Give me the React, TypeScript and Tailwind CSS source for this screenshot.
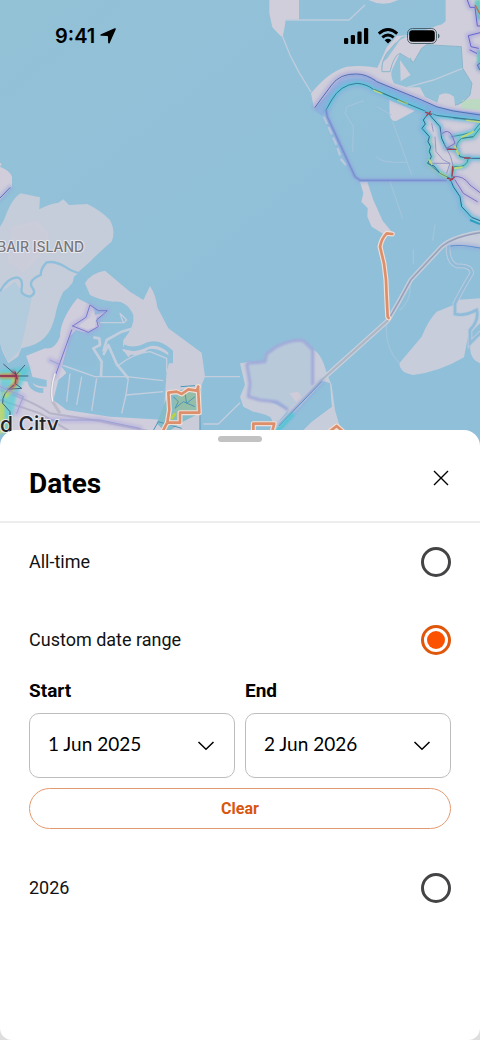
import { useState } from "react";

const WATER = "#90bfd9";

type TrailProps = { d: string; glow?: string; core?: string; hot?: boolean };

function Trail({ d, glow = "#8fa3dc", core = "#5a68b8", hot = false }: TrailProps) {
  return (
    <g fill="none" strokeLinejoin="round" strokeLinecap="round">
      <path d={d} stroke={glow} strokeWidth={hot ? 24 : 18} opacity="0.4" filter="url(#soft)" />
      {hot && <path d={d} stroke="#4fd0dc" strokeWidth="12" opacity="0.75" filter="url(#fine)" />}
      <path d={d} stroke={core} strokeWidth="3" />
    </g>
  );
}

function Segment({ d }: { d: string }) {
  return (
    <g fill="none" strokeLinejoin="round" strokeLinecap="round">
      <path d={d} stroke="#f1dfd5" strokeWidth="15" />
      <path d={d} stroke="#dd8f6c" strokeWidth="8" />
    </g>
  );
}

function HeatMap() {
  return (
    <svg
      className="absolute inset-x-0 top-0 h-[460px] w-full"
      viewBox="0 0 480 460"
      preserveAspectRatio="xMidYMin slice"
      role="img"
      aria-label="Heatmap of the bay"
    >
      <defs>
        <linearGradient id="bay" x1="0" y1="0" x2="0.5" y2="0.6">
          <stop offset="0" stopColor="#93c2d7" />
          <stop offset="1" stopColor={WATER} />
        </linearGradient>
        <filter id="soft" x="-200" y="-400" width="1400" height="1600" filterUnits="userSpaceOnUse">
          <feGaussianBlur stdDeviation="5" />
        </filter>
        <filter id="fine" x="-200" y="-400" width="1400" height="1600" filterUnits="userSpaceOnUse">
          <feGaussianBlur stdDeviation="3" />
        </filter>
      </defs>
      <rect width="480" height="460" fill="url(#bay)" />

      {/* north-east shore */}
      <g transform="translate(240 0) scale(0.33333)">
        <g fill="#cfceda">
          <path d="M88 0H177V60H137L134 80L128 112L118 104L97 82L88 40Z" />
          <path d="M385 0Q430 22 475 0Z" />
          <path d="M617 0V62Q612 72 595 76L520 104L470 108L440 142L412 203Q370 195 320 200Q265 215 213 280L222 325L300 245Q350 225 400 245L545 300L640 345L720 352V0Z" />
          <path d="M448 300L525 332L470 362Q455 368 449 345Z" />
          <path d="M560 345L720 365V675L695 655L665 620L655 580L630 535L575 500L565 485L570 410L550 370Z" />
          <path d="M360 545H382L400 600L428 662L455 695Q450 715 435 705L395 680L382 650L383 625L364 605L370 580Z" />
        </g>
        <path fill="#92c1d8" d="M510 108V170L520 188L545 145L560 134L664 140L668 205L696 250L690 285Q670 310 645 316L642 290Q620 272 598 285L592 308L555 290L540 262H500L462 250Q448 225 458 205L475 170L500 190Q470 160 450 215H426Q422 190 440 160L468 128L485 110Z" />
        <path fill="#cfceda" d="M480 180L512 225L482 244ZM442 175L480 120L510 105V180L480 160L452 216H425L430 185Z" />
        <path fill="#bcd9c1" d="M668 300L720 296V330L662 326Z" />
        <g fill="none" stroke="#bfcddd" strokeWidth="4">
          <path d="M137 60H327L375 15M127 108L150 165L177 217L213 276M500 262L580 240L668 205" />
          <path d="M510 178L520 188L545 145L560 134L664 140L668 205L696 250L690 285Q670 310 645 316M468 128L440 160Q422 190 426 215H450Q462 165 480 160L510 178" stroke="#8fb6cb" strokeWidth="3" />
          <path d="M320 320L372 302M320 320L315 340L340 380L338 455M410 320L455 345M458 365L515 525M410 470Q420 490 500 487M450 545L488 655" strokeWidth="3" stroke="#a7c5dc" />
          <path d="M252 350L290 435L305 480L322 500" strokeWidth="7" strokeDasharray="24 10" />
        </g>
        <path d="M235 340L285 272Q312 236 350 237Q385 238 410 258L550 320Q600 342 720 352" fill="none" stroke="#89afdd" strokeWidth="28" opacity="0.75" />
        <path d="M420 262L560 322Q620 342 720 350" fill="none" stroke="#72bce0" strokeWidth="16" opacity="0.8" />
        <Trail d="M225 322L275 255Q300 220 350 222Q380 222 410 245L545 300Q590 325 640 333L720 345" glow="#9593dd" core="#4d6eb3" />
        <Trail d="M258 330L275 300Q300 255 350 250Q380 252 400 268L500 310L560 335Q590 350 620 350L720 362" hot core="#3c7595" />
        <Trail d="M258 330L262 350L345 530L360 541H620" core="#6a81cc" />
        <path d="M258 330L262 350L345 530L360 541H620" fill="none" stroke="#7f93d6" strokeWidth="9" opacity="0.55" />
        <g fill="none" stroke="#c6d868" strokeWidth="12" opacity="0.55" filter="url(#fine)">
          <path d="M568 410L570 440L574 470L563 490L600 520L630 535M618 443L650 450L660 470L685 475M650 450Q645 430 665 415L700 410L720 385M685 475Q682 505 642 500L635 535" />
        </g>
        <Trail d="M565 340L550 360L556 372L546 385L568 410L564 425L572 440L568 455L574 470L563 490L582 498L600 520L630 535L640 560L660 590L665 620L695 652L720 662" hot core="#3a5d8e" />
        <Trail d="M565 340L600 380L605 415L618 443L650 450L660 470L685 475H720" hot core="#3a5d8e" />
        <Trail d="M685 475Q682 505 642 500L635 535M650 450Q645 430 665 415L700 410L720 385M635 410Q670 405 700 395L720 370" hot core="#3f8f96" />
        <Trail d="M607 400Q625 385 637 408L645 430L620 445M640 530Q670 525 690 555L720 578M645 540L670 580L712 605" glow="#a89fdc" core="#7774bf" />
        <path d="M585 410L588 455L610 480L630 490L620 520M570 490H630M575 370L580 395M640 500L632 470L612 430" fill="none" stroke="#7a7fbb" strokeWidth="2" />
        <g fill="none" stroke="#d5dc67" strokeWidth="6" strokeLinecap="round" opacity="0.8">
          <path d="M403 271L425 280M475 301L500 310M665 412L700 395M655 462L645 440M568 480L575 492M680 360L720 366M600 520L620 530M645 505L665 502" />
        </g>
        <path d="M403 268L500 310M665 415L700 410M565 490L600 520L630 535M640 354L720 362" fill="none" stroke="#3c7585" strokeWidth="2" />
        <g fill="none" stroke="#a63d50" strokeWidth="4" strokeLinecap="round">
          <path d="M557 337L574 343M560 347L571 335M622 448H648M674 474H690M622 535L638 538M638 500L636 528M630 542L643 532" />
        </g>
        <path d="M712 0L720 60M720 150V210" stroke="#50cbb6" strokeWidth="18" opacity="0.8" filter="url(#fine)" />
        <Trail d="M682 0L690 22H705L712 78H720M720 98L685 107L693 140L715 145M690 150L710 160M720 190L712 195L720 210" glow="#9a8fe0" core="#6565cb" />
        <path d="M705 15L720 42" stroke="#b7704c" strokeWidth="4" />
      </g>

      {/* western islands and salt ponds */}
      <g transform="translate(0 220) scale(0.33333)">
        <path fill="#d1cddb" d="M0 -172L5 -168L0 -160Q28 -150 36 -130V-100L0 -60Z" />
        <Trail d="M-6 -60L30 -97" />
        <path fill="#c5ccda" d="M0 20L12 0Q35 -65 62 -80L120 -68L118 -32Q150 -50 175 -52L190 -62L207 -45L262 -48Q300 -30 330 0Q348 35 335 65Q310 85 270 125L236 155Q220 195 190 215Q172 250 165 290Q155 330 135 352Q115 375 65 385Q55 400 50 440L20 440L0 370Z" />
        <path fill="#cfcdda" d="M35 20L110 0L150 40L120 110L70 160L20 120Z" opacity="0.6" filter="url(#soft)" />
        <path fill="#b2cbdd" d="M0 220L45 185L70 225L95 235L75 330L60 390L25 425L0 370Z" />
        <path fill={WATER} d="M215 200L222 170L240 155L262 185L245 225L228 240L190 300L178 352L135 385L60 400L120 365L150 345Q172 270 190 225Z" />
        <path fill={WATER} d="M0 380L25 430L75 395L70 435L100 480L80 520L20 450L0 430Z" />
        <path d="M240 160Q215 155 195 140Q165 122 140 127Q122 145 122 165Q85 180 95 200Q112 220 90 230Q60 225 65 205Q70 175 50 172Q20 175 0 215" fill="none" stroke="#8fbfda" strokeWidth="7" />
        <g fill="#cbccda">
          <path d="M255 190Q270 160 315 152L390 215L430 240L450 198Q468 225 472 262L505 325L605 398L615 470L605 495L600 640H480L490 600L500 455L512 410Q470 380 445 388Q410 420 368 392L370 360Q405 320 400 285Q380 240 340 245Q300 240 270 225Z" />
          <path fill="#d0cedc" d="M232 235L262 250Q285 260 285 285L322 275L290 295L300 320L265 335L215 345L185 440L200 460L175 480L160 540L200 570L330 590L500 600V640H0V480L60 480L100 490Q110 500 140 500V480L95 470L72 410L135 385Q165 390 180 350Q180 300 232 235Z" />
        </g>
        <path fill="#90bed9" d="M228 330L295 350L285 440L188 435L208 350ZM202 455L490 482V570L470 595L330 582L165 545L180 480Z" />
        <path fill="none" stroke={WATER} strokeWidth="14" d="M70 405Q80 430 90 470Q85 510 130 512M370 380Q400 395 440 375Q475 360 512 395V430" />
        <g fill="none" stroke="#c2cedd" strokeLinejoin="round">
          <path strokeWidth="8" d="M280 352L298 355L300 375L280 385L305 425L303 470M310 405L325 375L350 432L385 475M310 395L320 360L365 335L400 325" />
          <path strokeWidth="4" d="M185 435L285 470H380L490 482M350 440Q400 400 450 395L500 415V455M385 475L378 525L490 515M378 525L365 580M290 475L275 572M210 460L200 545M245 470L230 555M300 308H370L360 280L380 300L370 310M142 425L180 432M615 470H720M610 612H655L720 548" />
        </g>
        <path fill="#c9ccda" d="M368 388L402 394L385 412Z" />
        <path d="M0 510Q100 545 150 580L280 600L480 640M0 540L120 580L220 640" stroke="#a9a9c0" strokeWidth="6" fill="none" opacity="0.7" />
        <Trail d="M218 318L258 292L270 255L295 272H322L290 300L295 320L265 337L218 318M215 330L165 470" glow="#a69ee0" core="#7678cb" />
        <path d="M268 295L288 290L285 322L262 328L235 318Z" fill="#d2cfdd" />
        <path d="M165 460Q150 510 158 545L180 580" fill="none" stroke="#bdbbc8" strokeWidth="9" />
        <path d="M165 460Q150 510 158 545" fill="none" stroke="#f0eef5" strokeWidth="4" />
        <path d="M0 450L90 440L50 530L30 640H0Z" fill="#50cdd4" opacity="0.7" filter="url(#soft)" />
        <path d="M0 468H50L40 500L12 530M5 550V640" fill="none" stroke="#c9da52" strokeWidth="18" opacity="0.75" filter="url(#fine)" />
        <path d="M0 468H52L48 490L25 512M38 452L52 478" fill="none" stroke="#c33e5e" strokeWidth="9" opacity="0.8" strokeLinejoin="round" filter="url(#fine)" />
        <path d="M0 468H85M10 432L48 465L75 435M50 465L45 490L65 505L20 508M42 495Q5 520 8 550L30 575V600" fill="none" stroke="#45607c" strokeWidth="3" />
        <path d="M0 468H48L52 478L45 455" fill="none" stroke="#9c3050" strokeWidth="4" />
        <Trail d="M0 500L70 530L50 580M130 600L300 600L420 625M150 420L175 432" glow="#a79fe0" core="#9ca0d4" />
        <path d="M508 515L595 502L598 580L540 610L500 640L470 610Z" fill="#84bcca" />
        <path d="M520 540L550 515L590 515L588 570L545 575L530 600Z" fill="#9bbf9b" opacity="0.7" filter="url(#fine)" />
        <path d="M520 530L535 545L525 565L550 545L585 560M555 520L560 550L585 530M600 505V640M455 640L475 605L545 625M542 500L585 497" fill="none" stroke="#4c97b5" strokeWidth="3" />
        <path d="M513 597L526 580" stroke="#b7d344" strokeWidth="9" />
        <Segment d="M595 500L590 512L565 508L545 522L530 515L505 518L508 570L502 607L485 640M594 500L598 578H540V608H502" />
      </g>

      {/* eastern shore, bridge and sloughs */}
      <g transform="translate(240 220) scale(0.33333)">
        <g fill="#c7cdda">
          <path d="M478 430L545 350Q565 300 590 275L640 255L645 240L720 235V310L685 345L672 412Q600 455 520 465Q480 460 478 430Z" />
          <path d="M690 385Q700 350 720 345V430Q692 420 690 385Z" />
          <path d="M0 430L30 425L80 540L145 570L120 600L105 640H85Q120 590 60 580L40 575L10 560L0 530L15 495Z" />
          <path d="M218 388Q245 400 262 465L275 495L285 570L305 640H180L215 605L275 560L270 490L240 480L180 560L145 590L140 560L215 495Z" />
          <path d="M620 75Q650 50 720 45V82L640 78Z" />
        </g>
        <path fill={WATER} d="M240 485L268 490L275 560L210 608L180 640H120Z" />
        <path d="M20 430L75 425L80 402L110 380Q160 355 190 362L218 390V495L170 545L145 565L110 545L60 540L25 530L30 490Z" fill="#b8cada" />
        <path d="M20 430L75 425L80 402L110 380Q160 355 190 362L218 390V495M145 570L110 545L60 540L25 530L30 490L20 430" fill="none" stroke="#a2a9d9" strokeWidth="9" strokeLinejoin="round" filter="url(#fine)" />
        <path d="M148 520L175 515L188 535L170 550Z" fill="#d0cbd8" />
        <g fill="none" strokeLinecap="round">
          <path d="M440 310Q432 380 478 430M510 190Q515 240 480 270M520 90V130M585 15L578 60" stroke="#a0c5dc" strokeWidth="4" />
          <path d="M625 80Q622 125 650 138Q695 135 695 160Q665 210 645 250V282Q670 290 710 270Q718 300 690 330V370L720 340" stroke="#b9cadc" strokeWidth="14" />
          <path d="M625 80Q622 125 650 138Q695 135 695 160Q665 210 645 250V282Q670 290 710 270Q718 300 690 330V370L720 340" stroke="#90bcd9" strokeWidth="8" />
          <path d="M720 38Q640 50 605 80L512 180Q475 250 443 302L245 480L118 615" stroke="#c9cfdd" strokeWidth="14" />
          <path d="M720 38Q640 50 605 80L512 180Q475 250 443 302L245 480L118 615" stroke="#adb8c5" strokeWidth="7" />
          <path d="M720 38Q640 50 605 80L512 180Q475 250 443 302" stroke="#8288b8" strokeWidth="2" />
        </g>
        <Trail d="M245 485L118 617M632 78Q660 72 720 84" core="#5c8fce" />
        <path d="M160 580L105 640" stroke="#43c8d3" strokeWidth="14" opacity="0.7" filter="url(#fine)" />
        <path d="M690 0L720 12" stroke="#2b9fc0" strokeWidth="6" />
        <Segment d="M457 42L440 40Q425 55 420 80L432 130Q440 180 440 230L443 290L446 294" />
        <Segment d="M40 640V611H103L95 640M262 640L290 618L315 640" />
      </g>

      <g fontFamily="Inter, sans-serif" stroke="#e8e8ee" strokeWidth="2" paintOrder="stroke" strokeLinejoin="round">
        <text x="-3" y="252" fontSize="14" fontWeight="500" fill="#77777c">BAIR ISLAND</text>
        <text x="0" y="432" fontSize="21" fontWeight="500" fill="#242428">d City</text>
      </g>
    </svg>
  );
}

function StatusBar() {
  return (
    <div className="relative flex items-center justify-between pt-[22px] pr-10 pl-[55px] text-black">
      <div className="flex items-center gap-[5px]">
        <span className="font-['Inter',sans-serif] text-xl leading-7 font-semibold">9:41</span>
        <svg className="size-4" viewBox="0 0 16 16" aria-hidden="true">
          <path d="M14.600.3Q16.300-.2 15.700 1.500L9.700 14.900Q8.700 16.300 8.100 14.600L8 8.700Q7.900 8 7.300 8L1.200 7.800Q-.6 7.200 1 6.200Z" />
        </svg>
      </div>
      <div className="flex items-center gap-2">
        <svg className="h-4 w-[25px]" viewBox="0 0 25 16" aria-hidden="true">
          <rect x="0" y="10" width="4.200" height="6" rx="1.200" />
          <rect x="6.800" y="7" width="4.200" height="9" rx="1.200" />
          <rect x="13.400" y="3.500" width="4.200" height="12.500" rx="1.200" />
          <rect x="20" y="0" width="4.200" height="16" rx="1.200" />
        </svg>
        <svg className="h-4 w-[22px]" viewBox="0 0 22 16" fill="none" stroke="currentColor" strokeWidth="2.800" aria-hidden="true">
          <path d="M1.800 5.600Q11-2.500 20.200 5.600M5.300 9.400Q11 4.500 16.700 9.400" />
          <path d="M11 15.500L7.700 12.200Q11 9.500 14.300 12.200Z" fill="currentColor" stroke="none" />
        </svg>
        <svg className="h-4 w-[33px]" viewBox="0 0 33 16" aria-hidden="true">
          <rect x=".5" y=".5" width="29" height="15" rx="4.800" fill="none" stroke="#4d6570" />
          <rect x="2.200" y="2.200" width="25.600" height="11.600" rx="3.200" />
          <path d="M31 5.500Q32.600 6.300 32.600 8T31 10.500Z" fill="#4d6570" />
        </svg>
      </div>
    </div>
  );
}

type Range = "all" | "custom" | "2026";

function RangeOption({ id, label, checked, onSelect }: { id: Range; label: string; checked: boolean; onSelect: (id: Range) => void }) {
  return (
    <label className="flex h-[78px] items-center justify-between text-lg text-[#111111]">
      {label}
      <input
        type="radio"
        name="range"
        value={id}
        checked={checked}
        onChange={() => onSelect(id)}
        className="size-[30px] appearance-none rounded-full border-3 border-[#444446] bg-clip-content p-[3px] checked:border-[#e0560b] checked:bg-[#fc5200]"
      />
    </label>
  );
}

function DateField({ id, label, value }: { id: string; label: string; value: string }) {
  return (
    <div className="flex min-w-0 flex-1 flex-col gap-[10px]">
      <label htmlFor={id} className="text-[19px] leading-6 font-bold">
        {label}
      </label>
      <div className="relative">
        <select
          id={id}
          defaultValue={value}
          className="h-[65px] w-full appearance-none rounded-[10px] border border-[#bdbdbd] bg-white pr-12 pb-[3px] pl-[18px] font-['Lato',sans-serif] text-[19px] text-black"
        >
          <option>{value}</option>
        </select>
        <svg
          className="pointer-events-none absolute top-7 right-5 h-[10px] w-[18px]"
          viewBox="0 0 18 10"
          fill="none"
          stroke="black"
          strokeWidth="1.500"
          aria-hidden="true"
        >
          <path d="M1.500 1L9 8.300L16.500 1" />
        </svg>
      </div>
    </div>
  );
}

export default function App() {
  const [range, setRange] = useState<Range>("custom");

  return (
    <div className="relative flex min-h-screen flex-col overflow-hidden bg-[#dedede] font-['Roboto',sans-serif] text-black">
      <HeatMap />
      <header className="shrink-0 basis-[430px]">
        <StatusBar />
      </header>
      <main className="relative flex flex-1 flex-col rounded-t-2xl rounded-b-xl bg-white pt-[6px]">
        <div className="h-[6px] w-11 self-center rounded-full bg-[#c2c2c2]" />
        <div className="flex h-[81px] items-center justify-between border-b-2 border-[#ededed] px-[29px]">
          <h1 className="pt-1 text-[28px] leading-8 font-bold">Dates</h1>
          <button type="button" aria-label="Close" className="-mr-1 mb-2 flex size-7 items-center justify-center">
            <svg className="size-4" viewBox="0 0 16 16" fill="none" stroke="black" strokeWidth="1.400" aria-hidden="true">
              <path d="M1 1L15 15M15 1L1 15" />
            </svg>
          </button>
        </div>
        <form className="flex flex-col px-[29px]">
          <RangeOption id="all" label="All-time" checked={range === "all"} onSelect={setRange} />
          <RangeOption id="custom" label="Custom date range" checked={range === "custom"} onSelect={setRange} />
          <div className="flex gap-[10px]">
            <DateField id="start" label="Start" value="1 Jun 2025" />
            <DateField id="end" label="End" value="2 Jun 2026" />
          </div>
          <button type="button" className="mt-[10px] mb-5 h-[41px] rounded-full border border-[#e39a70] text-base font-bold text-[#d9560f]">
            Clear
          </button>
          <RangeOption id="2026" label="2026" checked={range === "2026"} onSelect={setRange} />
        </form>
      </main>
    </div>
  );
}
